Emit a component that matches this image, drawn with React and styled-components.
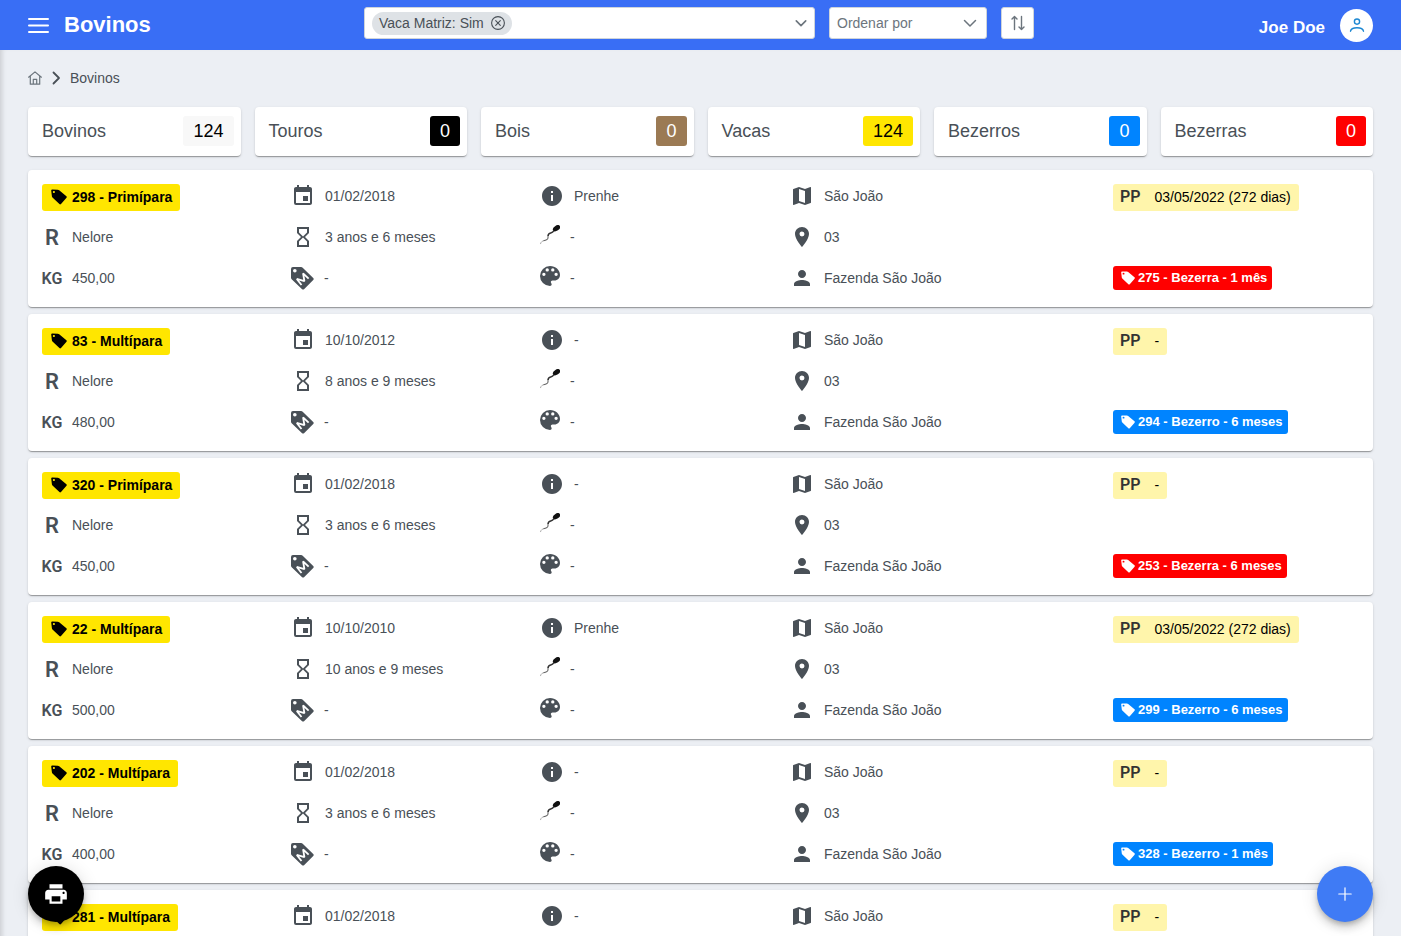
import React from "react";
import styled, { createGlobalStyle, css } from "styled-components";
import { MdEvent, MdHourglassEmpty, MdInfo, MdMap, MdPlace, MdPerson, MdPrint } from "react-icons/md";

const Global = createGlobalStyle`
  *, *::before, *::after { box-sizing: border-box; }
  body {
    margin: 0;
    background: #eceff4;
    color: #495057;
    font-family: "Liberation Sans", Arial, sans-serif;
    font-size: 14px;
    line-height: 20px;
  }
  button, select, input { font: inherit; color: inherit; }
  button { cursor: pointer; }
  svg { display: block; flex: none; }
`;

const raised = css`
  background: #fff;
  border-radius: 4px;
  box-shadow: 0 2px 1px -1px rgba(0, 0, 0, 0.2), 0 1px 1px rgba(0, 0, 0, 0.14),
    0 1px 3px rgba(0, 0, 0, 0.12);
`;

const Page = styled.div`
  min-height: 100vh;
`;

const Header = styled.header`
  position: sticky;
  top: 0;
  z-index: 3;
  display: grid;
  grid-template-columns: 336fr 670fr 339fr;
  align-items: center;
  height: 50px;
  padding: 0 28px;
  background: #396ef5;
  color: #fff;
`;

const Brand = styled.div`
  display: flex;
  align-items: center;
  gap: 15px;
`;

const Title = styled.h1`
  margin: 0;
  font-size: 22px;
  line-height: 28px;
`;

const PlainButton = styled.button`
  display: flex;
  padding: 0;
  border: 0;
  background: none;
`;

const Filters = styled.div`
  display: flex;
  gap: 14px;
  height: 32px;
  margin-bottom: 4px;
  color: #495057;
`;

const field = css`
  border: 1px solid #ced4da;
  border-radius: 3px;
  background: #fff;
`;

const ChipField = styled.div`
  ${field}
  flex: 1;
  min-width: 0;
  display: flex;
  align-items: center;
  gap: 7px;
  padding: 0 7px;
  color: #6c757d;
`;

const Chip = styled.span`
  display: flex;
  align-items: center;
  gap: 7px;
  height: 23px;
  padding: 0 7px;
  border-radius: 12px;
  background: #dee2e6;
  color: #495057;
  white-space: nowrap;
`;

const ChipInput = styled.input`
  flex: 1;
  min-width: 0;
  border: 0;
  outline: 0;
  background: none;
`;

const SelectWrap = styled.div`
  position: relative;
  width: 158px;
  color: #6c757d;
  svg {
    position: absolute;
    right: 10px;
    top: 9px;
    pointer-events: none;
  }
`;

const Select = styled.select`
  ${field}
  appearance: none;
  width: 100%;
  height: 32px;
  padding: 0 32px 0 7px;
`;

const SortButton = styled.button`
  ${field}
  display: flex;
  align-items: center;
  justify-content: center;
  width: 33px;
  padding: 0;
  color: #6c757d;
`;

const User = styled.div`
  display: flex;
  align-items: center;
  justify-content: flex-end;
  gap: 15px;
  font-size: 17px;
  font-weight: bold;
`;

const UserName = styled.span`
  padding-top: 5px;
`;

const Avatar = styled.button`
  display: flex;
  align-items: center;
  justify-content: center;
  width: 33px;
  height: 33px;
  padding: 0;
  border: 0;
  border-radius: 50%;
  background: #fff;
  color: #1e88d2;
`;

const Main = styled.main`
  min-height: calc(100vh - 50px);
  padding: 18px 28px 28px;
  box-shadow: inset 5px 0 5px -3px rgba(0, 0, 0, 0.14);
`;

const Crumbs = styled.nav`
  display: flex;
  align-items: center;
  gap: 9px;
  margin-bottom: 19px;
  a {
    color: #6c757d;
  }
`;

const Stats = styled.section`
  display: grid;
  grid-template-columns: repeat(6, 1fr);
  gap: 14px;
  margin-bottom: 14px;
`;

const Stat = styled.div`
  ${raised}
  display: flex;
  align-items: flex-start;
  justify-content: space-between;
  height: 49px;
  padding: 9px 7px 0 14px;
  font-size: 18px;
  line-height: 30px;
`;

const Count = styled.span`
  height: 30px;
  padding: 0 10px;
  border-radius: 3px;
  background: ${(p) => p.$bg};
  color: ${(p) => p.$fg};
`;

const List = styled.ul`
  display: grid;
  gap: 7px;
  margin: 0;
  padding: 0;
  list-style: none;
`;

const Card = styled.li`
  ${raised}
  display: grid;
  grid-template-columns: 249fr 249fr 250fr 323fr 246fr;
  padding: 14px;
`;

const Column = styled.div`
  display: grid;
  grid-template-rows: repeat(3, 27px);
  gap: 14px;
  align-items: start;
  justify-items: start;
`;

const Item = styled.div`
  display: flex;
  align-items: center;
  gap: 10px;
  height: 24px;
  white-space: nowrap;
`;

const IconTop = styled.span`
  align-self: flex-start;
`;

const Letters = styled.span`
  width: 20px;
  display: flex;
  justify-content: center;
  padding-top: 2px;
  font-family: Roboto, "Noto Sans", sans-serif;
  font-weight: 600;
  font-size: ${(p) => p.$size}px;
`;

const MainTag = styled.button`
  display: flex;
  align-items: center;
  gap: 5px;
  height: 27px;
  padding: 0 8px 2px 9px;
  border: 0;
  border-radius: 3px;
  background: #ffe600;
  color: #000;
  font-weight: bold;
`;

const BirthTag = styled.span`
  display: flex;
  align-items: center;
  gap: 14px;
  height: 27px;
  padding: 0 8px 2px 7px;
  border-radius: 3px;
  background: #fff5ab;
  color: #000;
`;

const PP = styled.span`
  font-family: Roboto, sans-serif;
  font-size: 16px;
  font-weight: 600;
  color: #333;
`;

const CalfTag = styled.button`
  grid-row: 3;
  display: flex;
  align-items: center;
  gap: 3px;
  height: 24px;
  padding: 0 5px 0 8px;
  border: 0;
  border-radius: 3px;
  background: ${(p) => (p.$female ? "#ff0000" : "#0084ff")};
  color: #fff;
  font-size: 13px;
  font-weight: bold;
`;

const Fab = styled.button`
  position: fixed;
  bottom: 14px;
  ${(p) => p.$side}: 28px;
  z-index: 2;
  display: flex;
  align-items: center;
  justify-content: center;
  width: 56px;
  height: 56px;
  padding: 0;
  border: 0;
  border-radius: 50%;
  background: ${(p) => p.$bg};
  color: #fff;
  box-shadow: 0 3px 5px -1px rgba(0, 0, 0, 0.2), 0 6px 10px rgba(0, 0, 0, 0.14),
    0 1px 18px rgba(0, 0, 0, 0.12);
`;

const Stroke = ({ w, h, box, d, width = 1.5 }) => (
  <svg width={w} height={h} viewBox={box} fill="none" stroke="currentColor" strokeWidth={width}
    strokeLinecap="round" strokeLinejoin="round" aria-hidden="true">
    <path d={d} />
  </svg>
);

const Chevron = ({ size, width }) => (
  <Stroke w={size} h={size} box="0 0 14 14" width={width} d="M1.5 4.5 7 10l5.500-5.500" />
);

const TagIcon = ({ size }) => (
  <svg width={size} height={size} viewBox="0 0 16 16" fill="currentColor" aria-hidden="true">
    <path fillRule="evenodd" d="M.2 1.500Q.2.500 1.200.500L6.800.700Q7.600.700 8.200 1.200L15.400 7.200Q16.200 8 15.500 8.800L10 15Q9.200 15.800 8.400 15.100L1.500 8.600Q1 8 .9 7.300ZM2.900 1.900a1.100 1.100 0 1 0 0 2.200 1.100 1.100 0 0 0 0-2.200Z" />
  </svg>
);

const BrandTagIcon = () => (
  <svg width="23" height="23" viewBox="0 0 24 24" aria-hidden="true">
    <path fill="currentColor" fillRule="evenodd" d="M2 0h8.500q1 0 1.700.7l11 10.800q1 1 0 2l-9.600 9.600q-1 1-2 0L.7 12.800Q0 12.100 0 11.200V2Q0 0 2 0Zm2 2a1.900 1.900 0 1 0 0 3.800A1.900 1.900 0 0 0 4 2Z" />
    <path transform="rotate(-42 12 12.500)" fill="none" stroke="#fff" strokeWidth="1.900" strokeLinejoin="bevel" d="M7 16.500 7.600 8.500 12 15.500 16.400 8.500 17 16.500" />
  </svg>
);

const SpermIcon = () => (
  <svg width="20" height="20" viewBox="0 0 20 20" fill="none" aria-hidden="true">
    <path d="M.5 18.700C1.200 16.300 2.800 15.800 4.500 15.500" stroke="#aaa" strokeWidth="1" strokeLinecap="round" />
    <path d="M3.500 15.700c2.600-.4 4.300-.8 4.500-2.700.1-1.200-.3-2 .3-3" stroke="#666" strokeWidth="1.100" />
    <path d="M8.100 11c0-2 1-2.600 2.600-3 1.600-.4 2.500-1.200 3.300-2.400" stroke="#333" strokeWidth="1.400" />
    <ellipse cx="16.500" cy="3.200" rx="4" ry="2.500" transform="rotate(-34 16.500 3.200)" fill="#111" />
  </svg>
);

const PaletteIcon = () => (
  <svg width="20" height="20" viewBox="3 3 18 18" fill="currentColor" aria-hidden="true">
    <path d="M12 3a9 9 0 0 0 0 18c.83 0 1.500-.67 1.500-1.500 0-.39-.15-.74-.39-1.010-.23-.26-.38-.61-.38-.99 0-.83.67-1.500 1.500-1.500H16c2.760 0 5-2.240 5-5 0-4.420-4.030-8-9-8Zm-5.500 9a1.500 1.500 0 1 1 0-3 1.500 1.500 0 0 1 0 3Zm3-4a1.500 1.500 0 1 1 0-3 1.500 1.500 0 0 1 0 3Zm5 0a1.500 1.500 0 1 1 0-3 1.500 1.500 0 0 1 0 3Zm3 4a1.500 1.500 0 1 1 0-3 1.500 1.500 0 0 1 0 3Z" />
  </svg>
);

const stats = [
  ["Bovinos", 124, "#f8f8f8", "#000"],
  ["Touros", 0, "#000", "#fff"],
  ["Bois", 0, "#9b7a54", "#fff"],
  ["Vacas", 124, "#ffe600", "#000"],
  ["Bezerros", 0, "#0084ff", "#fff"],
  ["Bezerras", 0, "#ff0000", "#fff"],
];

const cattle = [
  { tag: "298 - Primípara", kg: "450,00", born: "01/02/2018", age: "3 anos e 6 meses", status: "Prenhe", due: "03/05/2022 (272 dias)", calf: "275 - Bezerra - 1 mês", female: true },
  { tag: "83 - Multípara", kg: "480,00", born: "10/10/2012", age: "8 anos e 9 meses", status: "-", due: "-", calf: "294 - Bezerro - 6 meses" },
  { tag: "320 - Primípara", kg: "450,00", born: "01/02/2018", age: "3 anos e 6 meses", status: "-", due: "-", calf: "253 - Bezerra - 6 meses", female: true },
  { tag: "22 - Multípara", kg: "500,00", born: "10/10/2010", age: "10 anos e 9 meses", status: "Prenhe", due: "03/05/2022 (272 dias)", calf: "299 - Bezerro - 6 meses" },
  { tag: "202 - Multípara", kg: "400,00", born: "01/02/2018", age: "3 anos e 6 meses", status: "-", due: "-", calf: "328 - Bezerro - 1 mês" },
  { tag: "281 - Multípara", kg: "450,00", born: "01/02/2018", age: "3 anos e 6 meses", status: "-", due: "-" },
];

const AnimalCard = ({ a }) => (
  <Card>
    <Column>
      <MainTag type="button"><TagIcon size={16} />{a.tag}</MainTag>
      <Item><Letters $size={22}>R</Letters>Nelore</Item>
      <Item><Letters $size={16}>KG</Letters>{a.kg}</Item>
    </Column>
    <Column>
      <Item><MdEvent size={24} />{a.born}</Item>
      <Item><MdHourglassEmpty size={24} />{a.age}</Item>
      <Item><BrandTagIcon />-</Item>
    </Column>
    <Column>
      <Item><MdInfo size={24} />{a.status}</Item>
      <Item><IconTop><SpermIcon /></IconTop>-</Item>
      <Item><IconTop><PaletteIcon /></IconTop>-</Item>
    </Column>
    <Column>
      <Item><MdMap size={24} />São João</Item>
      <Item><MdPlace size={24} />03</Item>
      <Item><MdPerson size={24} />Fazenda São João</Item>
    </Column>
    <Column>
      <BirthTag><PP>PP</PP>{a.due}</BirthTag>
      {a.calf && <CalfTag type="button" $female={a.female}><TagIcon size={14} />{a.calf}</CalfTag>}
    </Column>
  </Card>
);

export default function App() {
  return (
    <Page>
      <Global />
      <Header>
        <Brand>
          <PlainButton type="button" aria-label="Menu">
            <Stroke w={21} h={21} box="0 0 21 21" width={2} d="M1 4h19M1 10.500h19M1 17h19" />
          </PlainButton>
          <Title>Bovinos</Title>
        </Brand>
        <Filters>
          <ChipField>
            <Chip>
              Vaca Matriz: Sim
              <PlainButton type="button" aria-label="Remover filtro">
                <Stroke w={14} h={14} box="0 0 14 14" width={1.1} d="M7 .6a6.400 6.400 0 1 0 0 12.800A6.400 6.400 0 0 0 7 .6ZM4.700 4.700l4.600 4.600M9.300 4.700 4.700 9.300" />
              </PlainButton>
            </Chip>
            <ChipInput aria-label="Filtros" />
            <PlainButton type="button" aria-label="Abrir filtros"><Chevron size={12} width={1.9} /></PlainButton>
          </ChipField>
          <SelectWrap>
            <Select aria-label="Ordenar por" defaultValue="">
              <option value="">Ordenar por</option>
            </Select>
            <Chevron size={14} width={1.5} />
          </SelectWrap>
          <SortButton type="button" aria-label="Inverter ordem">
            <Stroke w={16} h={16} box="0 0 16 16" width={1.4} d="M4.500 14.500v-13M2 4l2.500-2.500L7 4M11.500 1.500v13M9 12l2.500 2.500L14 12" />
          </SortButton>
        </Filters>
        <User>
          <UserName>Joe Doe</UserName>
          <Avatar type="button" aria-label="Conta">
            <Stroke w={16} h={16} box="0 0 16 16" width={1.4} d="M8 2a2.600 2.600 0 1 0 0 5.200A2.600 2.600 0 0 0 8 2ZM1.500 14.200C1.900 11.600 3.800 10.700 8 10.700s6.100.900 6.500 3.500" />
          </Avatar>
        </User>
      </Header>
      <Main>
        <Crumbs aria-label="Navegação">
          <PlainButton as="a" href="#inicio" aria-label="Início">
            <Stroke w={14} h={14} box="0 0 14 14" width={1.2} d="M.6 6.200 7 .9l6.400 5.300M2.300 5v8.200h9.400V5M5.300 13V8.300h3.400V13" />
          </PlainButton>
          <Stroke w={10} h={14} box="0 0 10 14" width={1.8} d="M2.500 1.500 8 7l-5.500 5.500" />
          <span>Bovinos</span>
        </Crumbs>
        <Stats>
          {stats.map(([label, n, bg, fg]) => (
            <Stat key={label}>{label}<Count $bg={bg} $fg={fg}>{n}</Count></Stat>
          ))}
        </Stats>
        <List>
          {cattle.map((a) => <AnimalCard key={a.tag} a={a} />)}
        </List>
      </Main>
      <Fab type="button" $side="left" $bg="#000" aria-label="Imprimir"><MdPrint size={26} /></Fab>
      <Fab type="button" $side="right" $bg="#3f7bf5" aria-label="Adicionar">
        <Stroke w={14} h={14} box="0 0 14 14" width={1.2} d="M7 .8v12.400M.8 7h12.400" />
      </Fab>
    </Page>
  );
}
